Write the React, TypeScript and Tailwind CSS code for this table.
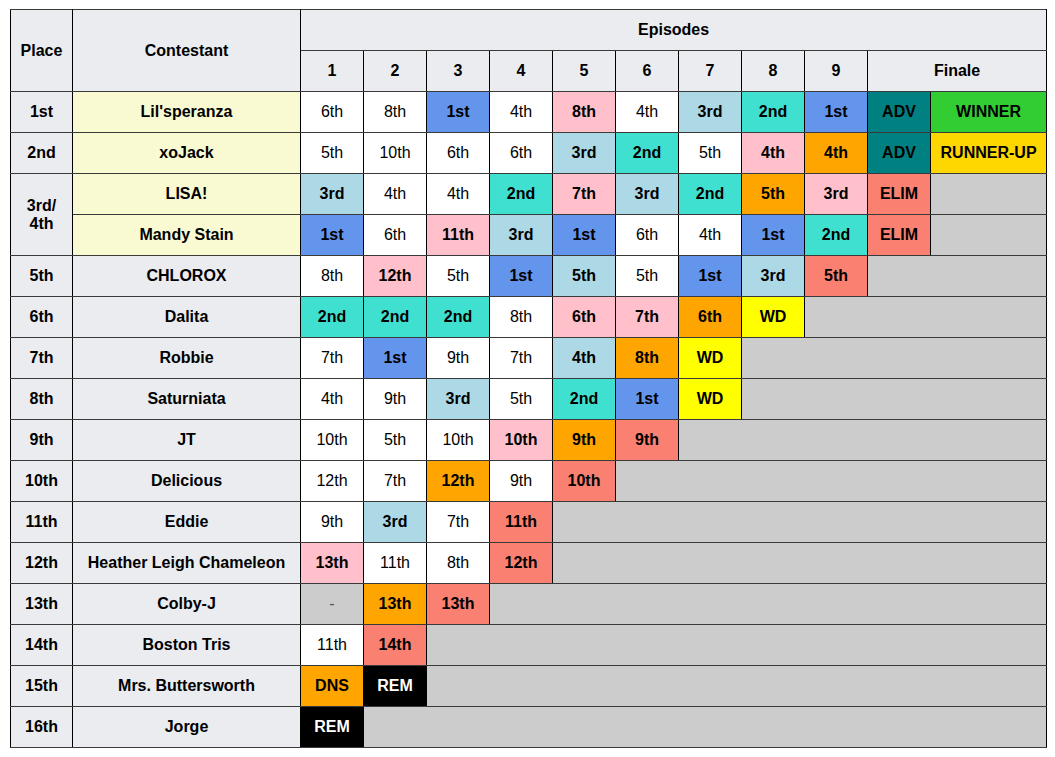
type Cell = { t: string; c: string };

const W = "bg-white";
const LB = "bg-[#add8e6]";
const RB = "bg-[#6495ed]";
const T = "bg-[#40e0d0]";
const P = "bg-[#ffc0cb]";
const O = "bg-[#ffa500]";
const S = "bg-[#fa8072]";
const Y = "bg-[#ffff00]";
const TEAL = "bg-[#008080]";
const LIME = "bg-[#32cd32]";
const GOLD = "bg-[#ffd700]";
const GREY = "bg-[#cccccc]";
const BLK = "bg-black text-white";

const c = (t: string, cl: string): Cell => ({ t, c: cl });

type Row = { place?: string; span?: number; name: string; top?: boolean; cells: Cell[] };

const rows: Row[] = [
  {
    place: "1st",
    name: "Lil'speranza",
    top: true,
    cells: [c("6th", W), c("8th", W), c("1st", RB), c("4th", W), c("8th", P), c("4th", W), c("3rd", LB), c("2nd", T), c("1st", RB), c("ADV", TEAL), c("WINNER", LIME)],
  },
  {
    place: "2nd",
    name: "xoJack",
    top: true,
    cells: [c("5th", W), c("10th", W), c("6th", W), c("6th", W), c("3rd", LB), c("2nd", T), c("5th", W), c("4th", P), c("4th", O), c("ADV", TEAL), c("RUNNER-UP", GOLD)],
  },
  {
    place: "3rd/\n4th",
    span: 2,
    name: "LISA!",
    top: true,
    cells: [c("3rd", LB), c("4th", W), c("4th", W), c("2nd", T), c("7th", P), c("3rd", LB), c("2nd", T), c("5th", O), c("3rd", P), c("ELIM", S)],
  },
  {
    name: "Mandy Stain",
    top: true,
    cells: [c("1st", RB), c("6th", W), c("11th", P), c("3rd", LB), c("1st", RB), c("6th", W), c("4th", W), c("1st", RB), c("2nd", T), c("ELIM", S)],
  },
  { place: "5th", name: "CHLOROX", cells: [c("8th", W), c("12th", P), c("5th", W), c("1st", RB), c("5th", LB), c("5th", W), c("1st", RB), c("3rd", LB), c("5th", S)] },
  { place: "6th", name: "Dalita", cells: [c("2nd", T), c("2nd", T), c("2nd", T), c("8th", W), c("6th", P), c("7th", P), c("6th", O), c("WD", Y)] },
  { place: "7th", name: "Robbie", cells: [c("7th", W), c("1st", RB), c("9th", W), c("7th", W), c("4th", LB), c("8th", O), c("WD", Y)] },
  { place: "8th", name: "Saturniata", cells: [c("4th", W), c("9th", W), c("3rd", LB), c("5th", W), c("2nd", T), c("1st", RB), c("WD", Y)] },
  { place: "9th", name: "JT", cells: [c("10th", W), c("5th", W), c("10th", W), c("10th", P), c("9th", O), c("9th", S)] },
  { place: "10th", name: "Delicious", cells: [c("12th", W), c("7th", W), c("12th", O), c("9th", W), c("10th", S)] },
  { place: "11th", name: "Eddie", cells: [c("9th", W), c("3rd", LB), c("7th", W), c("11th", S)] },
  { place: "12th", name: "Heather Leigh Chameleon", cells: [c("13th", P), c("11th", W), c("8th", W), c("12th", S)] },
  { place: "13th", name: "Colby-J", cells: [c("-", GREY), c("13th", O), c("13th", S)] },
  { place: "14th", name: "Boston Tris", cells: [c("11th", W), c("14th", S)] },
  { place: "15th", name: "Mrs. Buttersworth", cells: [c("DNS", O), c("REM", BLK)] },
  { place: "16th", name: "Jorge", cells: [c("REM", BLK)] },
];

const bd = "border-x border-x-black border-y border-y-[#3a3a3a]";

export default function App() {
  return (
    <div className="min-h-screen bg-white pt-[9px] pl-[10px] font-['Liberation_Sans',Arial,sans-serif] text-[16px] text-black">
      <table className="table-fixed border-collapse w-[1036px]">
        <colgroup>
          <col className="w-[62px]" />
          <col className="w-[228px]" />
          {Array.from({ length: 10 }).map((_, i) => (
            <col key={i} className="w-[63px]" />
          ))}
          <col className="w-[116px]" />
        </colgroup>
        <thead>
          <tr className="h-[41px]">
            <th rowSpan={2} className={`${bd} bg-[#eaecf0] font-bold`}>Place</th>
            <th rowSpan={2} className={`${bd} bg-[#eaecf0] font-bold`}>Contestant</th>
            <th colSpan={11} className={`${bd} bg-[#eaecf0] font-bold`}>Episodes</th>
          </tr>
          <tr className="h-[41px]">
            {[1, 2, 3, 4, 5, 6, 7, 8, 9].map((n) => (
              <th key={n} className={`${bd} bg-[#eaecf0] font-bold`}>{n}</th>
            ))}
            <th colSpan={2} className={`${bd} bg-[#eaecf0] font-bold`}>Finale</th>
          </tr>
        </thead>
        <tbody>
          {rows.map((r) => {
            const rest = 11 - r.cells.length;
            return (
              <tr key={r.name} className="h-[41px]">
                {r.place && (
                  <td rowSpan={r.span} className={`${bd} bg-[#eaecf0] text-center font-bold leading-[18px] whitespace-pre-line`}>
                    {r.place}
                  </td>
                )}
                <td className={`${bd} ${r.top ? "bg-[#fafad2]" : "bg-[#eaecf0]"} text-center font-bold`}>{r.name}</td>
                {r.cells.map((x, i) => (
                  <td
                    key={i}
                    className={`${bd} ${x.c} text-center ${x.c === W ? "font-normal" : x.t === "-" ? "font-normal text-[#555]" : "font-bold"}`}
                  >
                    {x.t}
                  </td>
                ))}
                {rest > 0 && <td colSpan={rest} className={`${bd} ${GREY}`} />}
              </tr>
            );
          })}
        </tbody>
      </table>
    </div>
  );
}
